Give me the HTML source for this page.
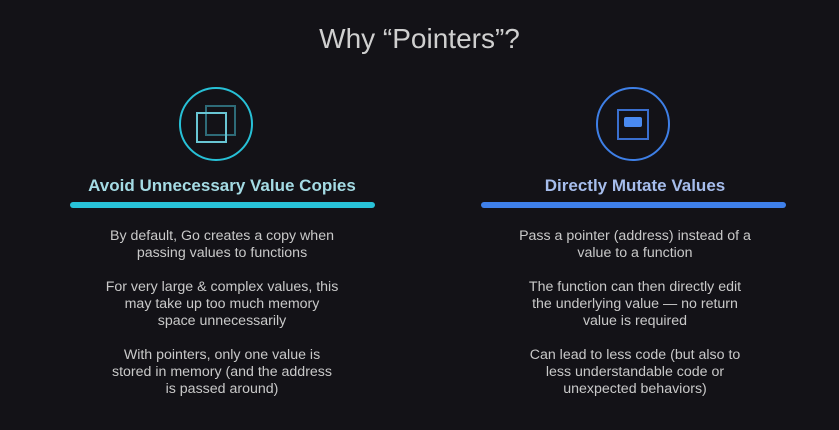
<!DOCTYPE html>
<html><head><meta charset="utf-8"><style>
body{margin:0;width:839px;height:430px;background:#131217;font-family:"Liberation Sans",sans-serif;overflow:hidden;position:relative}
.t{position:absolute;left:0;width:839px;top:23px;text-align:center;color:#cfcfcf;font-size:28px}
.col{position:absolute;width:340px;text-align:center}
.h{font-size:17px;font-weight:bold;position:absolute;width:100%;top:176px}
.p{position:absolute;width:100%;color:#c9c9c9;font-size:14.2px;line-height:17px}
.bar{position:absolute;height:6px;border-radius:3px;top:202px}
</style></head><body>
<div class="t">Why “Pointers”?</div>
<svg width="839" height="430" style="position:absolute;left:0;top:0">
<circle cx="216" cy="124" r="36" fill="none" stroke="#27c0d6" stroke-width="2"/>
<rect x="206" y="106" width="29" height="29" fill="none" stroke="#2e6b78" stroke-width="2"/>
<rect x="197" y="113" width="29" height="29" fill="none" stroke="#69c6d4" stroke-width="2"/>
<circle cx="633" cy="124" r="36" fill="none" stroke="#3e7fe6" stroke-width="2"/>
<rect x="618" y="110" width="30" height="29" fill="none" stroke="#3a6fcf" stroke-width="2"/>
<rect x="624" y="117" width="18" height="10" rx="2" fill="#4a8af0"/>
</svg>
<div class="bar" style="left:70px;width:305px;background:#28c2d8"></div>
<div class="bar" style="left:481px;width:305px;background:#3f80ea"></div>
<div class="col" style="left:52px">
<div class="h" style="color:#a4dbe4">Avoid Unnecessary Value Copies</div>
<div class="p" style="top:228px">By default, Go creates a copy when<br>passing values to functions</div>
<div class="p" style="top:279px">For very large &amp; complex values, this<br>may take up too much memory<br>space unnecessarily</div>
<div class="p" style="top:347px">With pointers, only one value is<br>stored in memory (and the address<br>is passed around)</div>
</div>
<div class="col" style="left:465px">
<div class="h" style="color:#a6bdec">Directly Mutate Values</div>
<div class="p" style="top:228px">Pass a pointer (address) instead of a<br>value to a function</div>
<div class="p" style="top:279px">The function can then directly edit<br>the underlying value — no return<br>value is required</div>
<div class="p" style="top:347px">Can lead to less code (but also to<br>less understandable code or<br>unexpected behaviors)</div>
</div>
</body></html>
